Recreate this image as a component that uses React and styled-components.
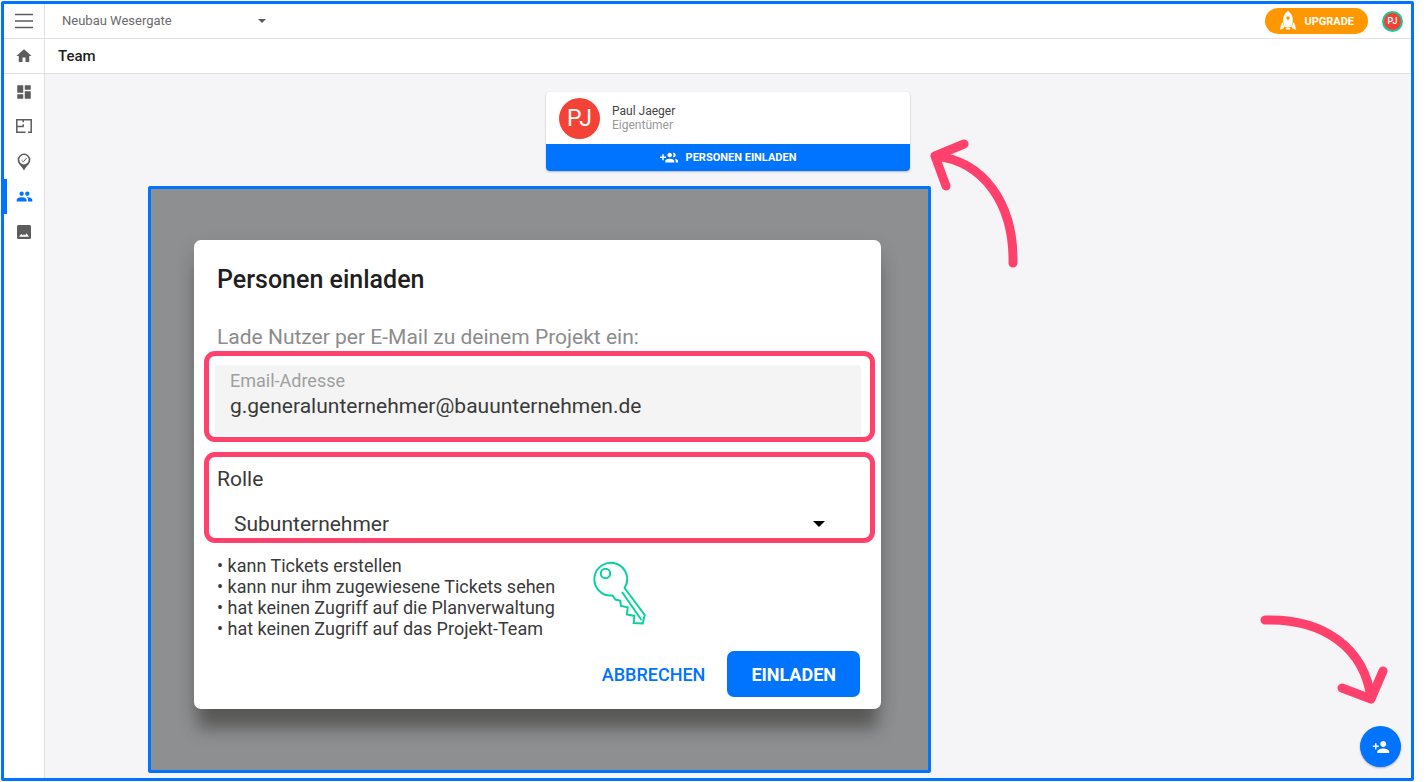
import React, {useState} from 'react';
import styled, {createGlobalStyle} from "styled-components";
import {MdDashboard, MdHome, MdPeople, MdPersonAdd} from "react-icons/md";

const roles = ["Subunternehmer", "Bauleiter", "Eigentümer"];

const permissions = [
    "kann Tickets erstellen",
    "kann nur ihm zugewiesene Tickets sehen",
    "hat keinen Zugriff auf die Planverwaltung",
    "hat keinen Zugriff auf das Projekt-Team",
];

const MenuIcon = () => (
    <svg width="18" height="16" viewBox="0 0 18 16" stroke="#5c5c5c" strokeWidth="1.3">
        <path d="M0 1.5h18M0 8h18M0 14.5h18"/>
    </svg>
);

const PlanIcon = () => (
    <svg width="16" height="16" viewBox="0 0 16 16" fill="none" stroke="currentColor" strokeWidth="1.5">
        <path d="M9.5 13.300H.8V.8h14.400v12.500H12M7.200.8v2.400M.8 7.500h6.900M7.200 7.500V5.300"/>
    </svg>
);

const PinIcon = () => (
    <svg width="14" height="18" viewBox="0 0 14 18">
        <path d="M7 .6a6.300 6.300 0 0 0-6.300 6.300c0 4 4 6 6.300 10.500 2.300-4.500 6.300-6.500 6.300-10.500A6.300 6.300 0 0 0 7 .6z" fill="currentColor"/>
        <circle cx="7" cy="6.800" r="4.700" fill="#fff"/>
        <path d="M4.500 7.200l1.800 1.700 3.400-4" fill="none" stroke="currentColor" strokeWidth="1"/>
    </svg>
);

const PhotoIcon = () => (
    <svg width="14" height="14" viewBox="0 0 14 14">
        <rect width="14" height="14" rx="1.500" fill="currentColor"/>
        <path d="M2 11.800l2.300-2.800 1.600 1.400 1-1.200 1.200 1 1.400-2 2.500 3.600z" fill="#fff"/>
    </svg>
);

const GroupAddIcon = () => (
    <svg width="18" height="18" viewBox="0 0 24 24" fill="currentColor">
        <path d="M8 10H5V7H3v3H0v2h3v3h2v-3h3v-2zm10 1c1.660 0 2.990-1.340 2.990-3S19.660 5 18 5c-.32 0-.63.05-.91.14.57.81.9 1.790.9 2.860s-.34 2.040-.9 2.860c.28.09.59.14.91.14zm-5 0c1.660 0 2.990-1.340 2.990-3S14.660 5 13 5c-1.660 0-3 1.340-3 3s1.340 3 3 3zm6.620 2.160c.83.73 1.380 1.660 1.380 2.840v2h3v-2c0-1.540-2.370-2.490-4.380-2.840zM13 13c-2 0-6 1-6 3v2h12v-2c0-2-4-3-6-3z"/>
    </svg>
);

const RocketIcon = () => (
    <svg width="16" height="20" viewBox="0 0 16 20" fill="#fff">
        <path fillRule="evenodd" d="M8 0c3.300 2.200 4.800 5 4.800 8.400 0 2.700-.5 5-1.400 7.600H4.600C3.700 13.400 3.200 11.100 3.200 8.400 3.200 5 4.700 2.200 8 0zm0 5.300a1.800 1.800 0 1 0 0 3.600 1.800 1.800 0 0 0 0-3.600z"/>
        <path d="M2.900 11C1 12.800.3 15.200.3 19l3.900-2.300c-.7-2-1.100-3.800-1.300-5.700zM13.100 11c1.900 1.800 2.600 4.200 2.600 8l-3.900-2.300c.7-2 1.100-3.800 1.300-5.700zM5.500 16.500h5l-.9 1.900H6.400z"/>
    </svg>
);

const KeyIcon = () => (
    <svg width="54" height="72" viewBox="0 0 54 72" fill="none" stroke="#0bd1a0" strokeWidth="2">
        <circle cx="13.500" cy="12.500" r="4.700"/>
        <path d="M32.600 27A16.400 16.400 0 1 0 20.500 34.500l3 4 4.800 1.200.6 5.300 6.800 1.300-.8 7.200 7.500 1.400-.7 7.100 9 .5 2-8.500L32.600 27z"/>
        <path d="M30 31l19.500 28"/>
    </svg>
);

const CaretIcon = ({size, color}) => (
    <svg width={size} height={size / 2} viewBox="0 0 10 5">
        <path d="M0 0h10L5 5z" fill={color}/>
    </svg>
);

const navItems = [
    {name: "Dashboard", icon: <MdDashboard size={18}/>},
    {name: "Pläne", icon: <PlanIcon/>},
    {name: "Tickets", icon: <PinIcon/>},
    {name: "Team", icon: <MdPeople size={17}/>},
    {name: "Fotos", icon: <PhotoIcon/>},
];

const App = () => {
    const [email, setEmail] = useState("g.generalunternehmer@bauunternehmen.de");
    const [role, setRole] = useState(roles[0]);

    return (
        <Frame>
            <GlobalStyle/>
            <Sidebar>
                <NavButton type="button" aria-label="Menü" $line><MenuIcon/></NavButton>
                <NavLink href="#home" aria-label="Start" $line><MdHome size={18}/></NavLink>
                {navItems.map((item) => (
                    <NavLink key={item.name} href="#" aria-label={item.name} $active={item.name === "Team"}>
                        {item.icon}
                    </NavLink>
                ))}
            </Sidebar>

            <Page>
                <TopBar>
                    <ProjectPicker>
                        <ProjectSelect aria-label="Projekt">
                            <option>Neubau Wesergate</option>
                        </ProjectSelect>
                        <CaretIcon size={8} color="#5c5c5c"/>
                    </ProjectPicker>
                    <UpgradeButton type="button"><RocketIcon/>UPGRADE</UpgradeButton>
                    <UserBadge type="button">PJ</UserBadge>
                </TopBar>
                <TitleBar><h1>Team</h1></TitleBar>

                <Content>
                    <MemberCard>
                        <Member>
                            <Avatar>PJ</Avatar>
                            <div>
                                <MemberName>Paul Jaeger</MemberName>
                                <MemberRole>Eigentümer</MemberRole>
                            </div>
                        </Member>
                        <InviteButton type="button"><GroupAddIcon/>PERSONEN EINLADEN</InviteButton>
                        <CardArrow width="94" height="132" viewBox="0 0 94 132">
                            <path d="M86 125C87 66 57 23 8 18M37 6L8 18l11 30"/>
                        </CardArrow>
                    </MemberCard>

                    <Backdrop>
                        <Dialog role="dialog" aria-labelledby="invite-title">
                            <DialogTitle id="invite-title">Personen einladen</DialogTitle>
                            <DialogText>Lade Nutzer per E-Mail zu deinem Projekt ein:</DialogText>
                            <Highlight>
                                <EmailField>
                                    <label htmlFor="email">Email-Adresse</label>
                                    <input id="email" type="email" value={email}
                                           onChange={(e) => setEmail(e.target.value)}/>
                                </EmailField>
                            </Highlight>
                            <Highlight>
                                <RoleLabel htmlFor="role">Rolle</RoleLabel>
                                <RolePicker>
                                    <select id="role" value={role} onChange={(e) => setRole(e.target.value)}>
                                        {roles.map((r) => <option key={r}>{r}</option>)}
                                    </select>
                                    <CaretIcon size={12} color="#000"/>
                                </RolePicker>
                            </Highlight>
                            <Permissions>
                                <ul>
                                    {permissions.map((text) => <li key={text}>{text}</li>)}
                                </ul>
                                <KeyIcon/>
                            </Permissions>
                            <Actions>
                                <DialogButton type="button">ABBRECHEN</DialogButton>
                                <DialogButton type="button" $primary>EINLADEN</DialogButton>
                            </Actions>
                        </Dialog>
                    </Backdrop>
                </Content>
            </Page>

            <Corner>
                <Arrow width="138" height="96" viewBox="0 0 138 96">
                    <path d="M8 8C66 6 108 36 114 87M85 76l29 11 12-28"/>
                </Arrow>
                <AddButton type="button" aria-label="Person hinzufügen"><MdPersonAdd size={18}/></AddButton>
            </Corner>
        </Frame>
    );
};

const GlobalStyle = createGlobalStyle`
  * {
    box-sizing: border-box;
  }
  body {
    margin: 0;
    background: #fff;
    font-family: Roboto, "Liberation Sans", sans-serif;
  }
  h1, h2, p, ul {
    margin: 0;
    padding: 0;
  }
  button, input, select {
    font-family: inherit;
    border: none;
    padding: 0;
    background: none;
    appearance: none;
  }
  button {
    cursor: pointer;
  }
`

const Frame = styled.div`
  position: relative;
  display: flex;
  min-height: calc(100vh - 2px);
  margin: 1px 13px 0 1px;
  border: 3px solid #0073ff;
  border-radius: 2px;
  background: #f5f5f8;
`

const Sidebar = styled.nav`
  display: flex;
  flex-direction: column;
  flex: 0 0 41px;
  background: #fff;
  border-right: 1px solid #e0e0e0;
`

const NavLink = styled.a`
  display: flex;
  align-items: center;
  justify-content: center;
  height: 35px;
  color: ${(p) => (p.$active ? "#0073ff" : "#5c5c5c")};
  border-bottom: ${(p) => (p.$line ? "1px solid #e0e0e0" : "none")};
  box-shadow: ${(p) => (p.$active ? "inset 3px 0 #0073ff" : "none")};
`

const NavButton = styled(NavLink).attrs({as: "button"})``

const Page = styled.div`
  display: flex;
  flex-direction: column;
  flex: 1;
  min-width: 0;
`

const TopBar = styled.header`
  display: flex;
  align-items: center;
  height: 35px;
  padding-right: 8px;
  background: #fff;
  border-bottom: 1px solid #e0e0e0;
`

const ProjectPicker = styled.div`
  display: grid;
  align-items: center;
  width: 221px;
  margin-right: auto;

  & > * {
    grid-area: 1 / 1;
  }
  svg {
    justify-self: end;
    pointer-events: none;
  }
`

const ProjectSelect = styled.select`
  padding-left: 17px;
  font-size: 13px;
  line-height: 20px;
  color: #6b6b6b;
`

const UpgradeButton = styled.button`
  display: flex;
  align-items: center;
  gap: 8px;
  height: 26px;
  padding: 0 14px 0 15px;
  border-radius: 13px;
  background: #ff9800;
  color: #fff;
  font-size: 11px;
  font-weight: 700;
`

const UserBadge = styled.button`
  width: 21px;
  height: 21px;
  margin-left: 14px;
  border: 2px solid #1bc79b;
  border-radius: 50%;
  background: #f44336;
  color: #fff;
  font-size: 9px;
  font-weight: 500;
`

const TitleBar = styled.div`
  height: 35px;
  padding-left: 13px;
  background: #fff;
  border-bottom: 1px solid #e0e0e0;

  h1 {
    font-size: 15px;
    font-weight: 500;
    line-height: 34px;
    color: #1f1f1f;
  }
`

const Content = styled.main`
  display: flex;
  flex-direction: column;
  padding: 18px 0 5px;
`

const MemberCard = styled.section`
  position: relative;
  align-self: center;
  width: 364px;
  border-radius: 4px;
  background: #fff;
  box-shadow: 0 1px 2px rgba(0, 0, 0, 0.25);
`

const Member = styled.div`
  display: flex;
  align-items: center;
  gap: 12px;
  height: 52px;
  padding-left: 13px;
`

const Avatar = styled.div`
  width: 41px;
  border-radius: 50%;
  background: #f44336;
  color: #fff;
  font-size: 23px;
  line-height: 41px;
  text-align: center;
`

const MemberName = styled.p`
  font-size: 12px;
  line-height: 14px;
  color: #444;
`

const MemberRole = styled(MemberName)`
  color: #999;
`

const InviteButton = styled.button`
  display: flex;
  align-items: center;
  justify-content: center;
  gap: 8px;
  width: 100%;
  height: 27px;
  border-radius: 0 0 4px 4px;
  background: #0073ff;
  color: #fff;
  font-size: 11px;
  font-weight: 700;
`

const Arrow = styled.svg`
  margin-right: 6px;
  fill: none;
  stroke: #ff416c;
  stroke-width: 9px;
  stroke-linecap: round;
  stroke-linejoin: round;
  pointer-events: none;
`

const CardArrow = styled(Arrow)`
  position: absolute;
  top: 46px;
  left: calc(100% + 17px);
`

const Backdrop = styled.div`
  width: 783px;
  max-width: 100%;
  margin: 15px 0 0 103px;
  padding: 51px 47px 61px 43px;
  border: 3px solid #0073ff;
  border-radius: 2px;
  background: #8e8f91;
`

const Dialog = styled.section`
  display: flex;
  flex-direction: column;
  padding: 25px 6px 12px 10px;
  border-radius: 7px;
  background: #fff;
  box-shadow: 0 24px 16px -4px rgba(50, 50, 44, 0.5), 0 8px 20px rgba(0, 0, 0, 0.12);
`

const DialogTitle = styled.h2`
  padding-left: 13px;
  font-size: 25px;
  font-weight: 500;
  line-height: 30px;
  color: #1f1f1f;
`

const DialogText = styled.p`
  margin: 30px 0 2px;
  padding-left: 13px;
  font-size: 21px;
  line-height: 24px;
  color: #8c8c8c;
`

const Highlight = styled.div`
  border: 5px solid #ff416c;
  border-radius: 11px;

  & + & {
    margin-top: 10px;
  }
`

const EmailField = styled.div`
  display: flex;
  flex-direction: column;
  gap: 3px;
  margin: 9px 9px 2px 6px;
  padding: 6px 15px 17px;
  border-radius: 4px 4px 0 0;
  background: #f4f4f4;

  label {
    font-size: 18px;
    line-height: 20px;
    color: #a0a0a0;
  }
  input {
    height: 24px;
    font-size: 21px;
    color: #3a3a3a;
  }
`

const RoleLabel = styled.label`
  display: block;
  padding: 10px 0 0 8px;
  font-size: 21px;
  line-height: 24px;
  color: #3a3a3a;
`

const RolePicker = styled.div`
  display: grid;
  align-items: center;
  margin: 21px 45px 2px 25px;

  & > * {
    grid-area: 1 / 1;
  }
  select {
    height: 24px;
    font-size: 21px;
    color: #3a3a3a;
  }
  svg {
    justify-self: end;
    pointer-events: none;
  }
`

const Permissions = styled.div`
  display: flex;
  align-items: center;
  gap: 37px;
  margin: 12px 0;
  padding-left: 13px;

  ul {
    list-style: none;
  }
  li {
    font-size: 18px;
    line-height: 21px;
    color: #3a3a3a;
  }
  li::before {
    content: "• ";
  }
`

const Actions = styled.div`
  display: flex;
  justify-content: flex-end;
  padding-right: 15px;
`

const DialogButton = styled.button`
  height: 46px;
  padding: 0 ${(p) => (p.$primary ? "24px" : "22px")};
  border-radius: 7px;
  background: ${(p) => (p.$primary ? "#0073ff" : "transparent")};
  color: ${(p) => (p.$primary ? "#fff" : "#0073ff")};
  font-size: 18px;
  font-weight: ${(p) => (p.$primary ? 700 : 500)};
`

const Corner = styled.div`
  position: absolute;
  right: 10px;
  bottom: 11px;
  display: flex;
  flex-direction: column;
  align-items: flex-end;
  gap: 18px;
`

const AddButton = styled.button`
  display: flex;
  align-items: center;
  justify-content: center;
  width: 41px;
  height: 41px;
  border-radius: 50%;
  background: #0073ff;
  color: #fff;
  box-shadow: 0 1px 2px rgba(0, 0, 0, 0.3);
`

export default App;
